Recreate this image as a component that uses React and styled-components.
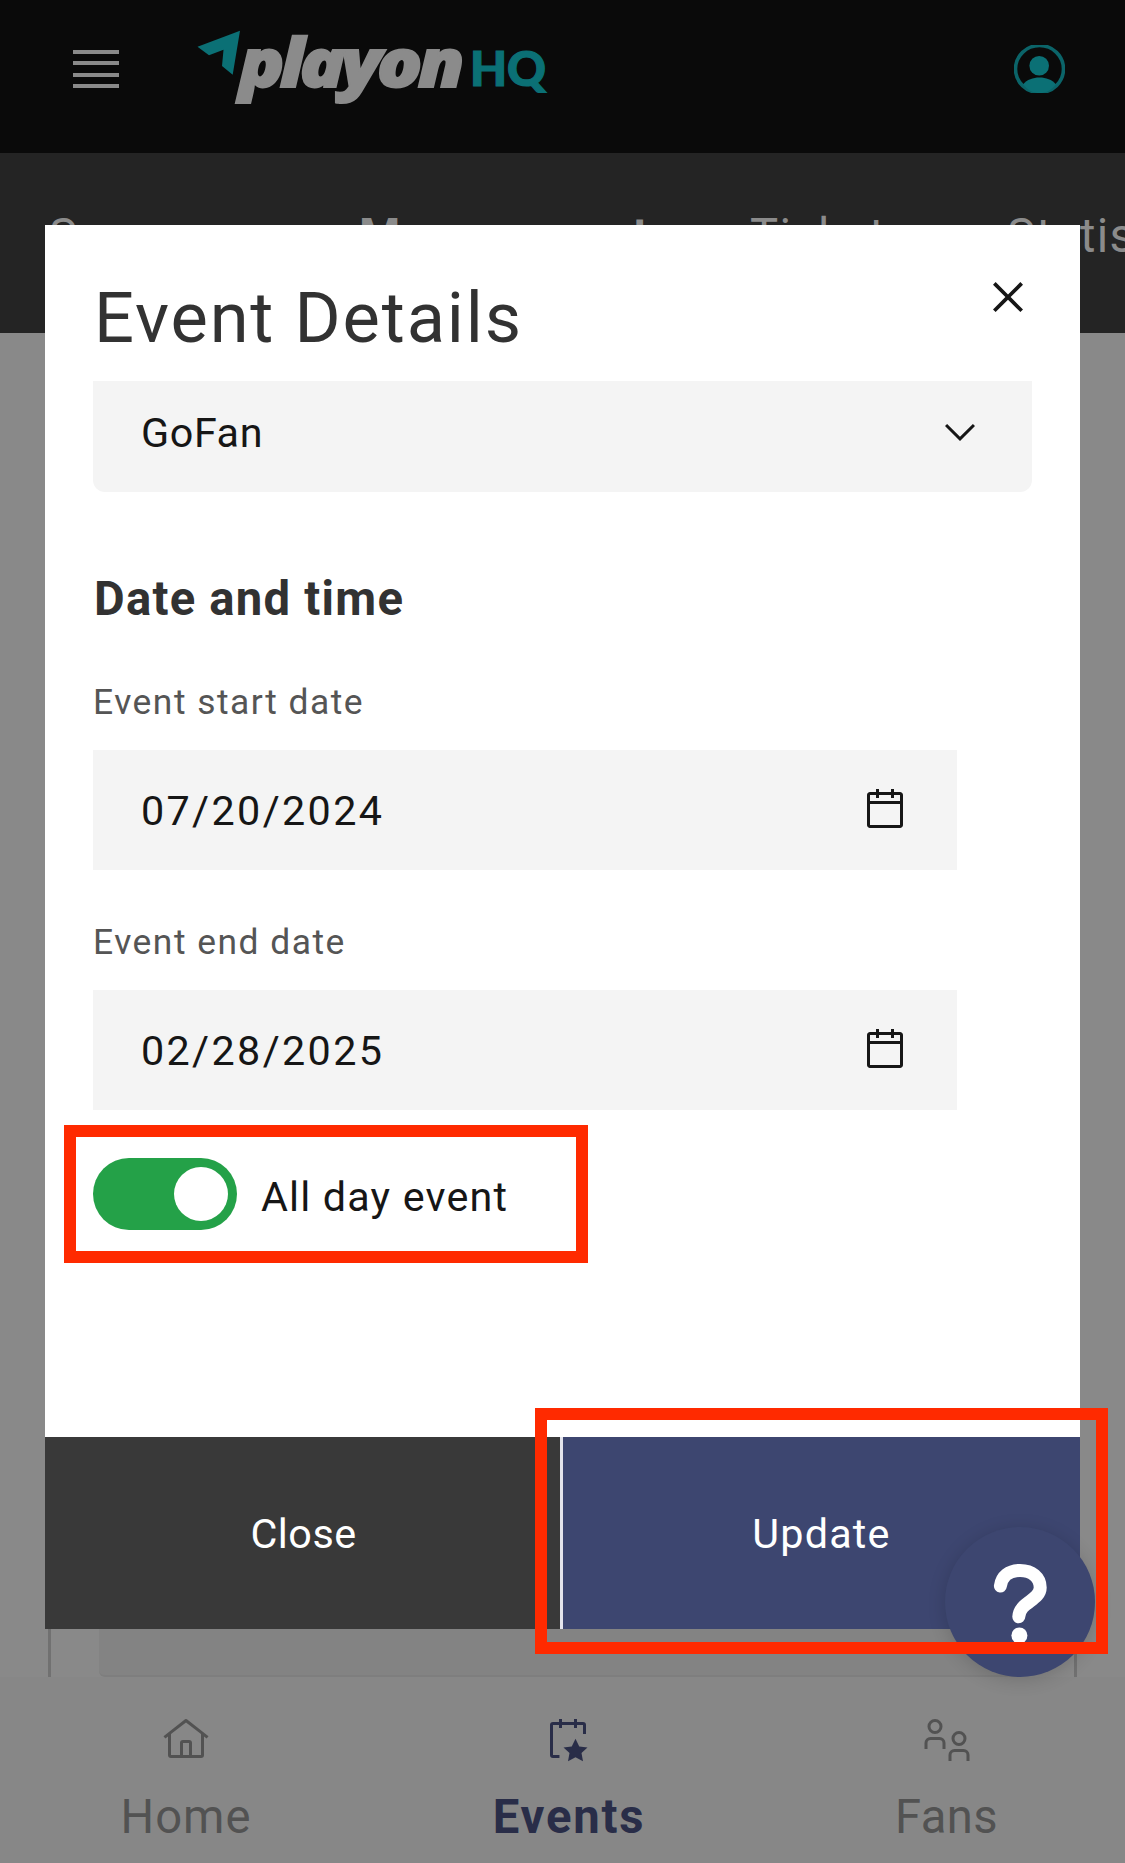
import React from "react";
import styled, { createGlobalStyle, css } from "styled-components";

const GlobalStyle = createGlobalStyle`
  *, *::before, *::after { box-sizing: border-box; }
  body {
    margin: 0;
    background: #888888;
    font-family: Roboto, "Liberation Sans", sans-serif;
  }
  h1, h2, p { margin: 0; }
  button { font: inherit; border: 0; padding: 0; background: none; }
  svg { display: block; }
`;

const Page = styled.div`
  position: relative;
  display: flex;
  flex-direction: column;
  width: 1125px;
  height: 1863px;
  overflow: hidden;
  background: #888888;
`;

const TopBar = styled.header`
  display: flex;
  flex: none;
  height: 153px;
  padding: 25px 60px 0 73px;
  background: #0a0a0a;
`;

const MenuButton = styled.button`
  display: flex;
  flex-direction: column;
  justify-content: space-between;
  width: 46px;
  height: 38px;
  margin: 25px 76px 0 0;
`;

const MenuBar = styled.span`
  height: 4px;
  background: #8a8a8a;
`;

const Account = styled.button`
  width: 51px;
  height: 48px;
  margin: 20px 0 0 auto;
`;

const TabBar = styled.nav`
  display: grid;
  grid-template-columns: 310px 391px 257px 260px;
  flex: none;
  height: 180px;
  padding: 53px 0 0 49px;
  background: #242424;
`;

const Tab = styled.span`
  color: #8b8b8b;
  font-size: 47.2px;
  line-height: 60px;
  letter-spacing: ${(p) => (p.$active ? "1.1px" : "1.3px")};
  font-weight: ${(p) => (p.$active ? 700 : 400)};
  white-space: nowrap;
`;

const Content = styled.main`
  display: flex;
  flex: 1;
  padding: 0 48px;
  background: #898989;
`;

const Card = styled.div`
  display: flex;
  flex: 1;
  padding: 0 48px;
  border: solid #717171;
  border-width: 0 3px;
`;

const CardField = styled.div`
  flex: 1;
  border-bottom: 2px solid #7e7e7e;
  border-radius: 0 0 6px 6px;
  background: #838383;
`;

const BottomNav = styled.nav`
  display: flex;
  flex: none;
  height: 186px;
  background: #878787;
`;

const NavItem = styled.div`
  display: flex;
  flex-direction: column;
  align-items: center;
  width: ${(p) => p.$width}px;
  padding-top: 39px;
  color: ${(p) => (p.$active ? "#292d48" : "#525252")};
  font-weight: ${(p) => (p.$active ? 700 : 400)};
`;

const NavLabel = styled.span`
  margin-top: 23px;
  padding-left: ${(p) => (p.$active ? 3 : 0)}px;
  font-size: 47.2px;
  line-height: 60px;
  letter-spacing: ${(p) => p.$spacing}px;
`;

const Modal = styled.section`
  position: absolute;
  top: 225px;
  left: 45px;
  display: flex;
  flex-direction: column;
  width: 1035px;
  height: 1404px;
  background: #ffffff;
`;

const ModalHeader = styled.div`
  display: flex;
  justify-content: space-between;
  height: 156px;
  padding: 42px 42px 0 49px;
`;

const Title = styled.h1`
  margin-top: 9px;
  color: #323232;
  font-size: 70.4px;
  font-weight: 400;
  line-height: 84px;
  letter-spacing: 1.85px;
`;

const IconButton = styled.button`
  height: 60px;
  color: #161616;
`;

const ModalBody = styled.div`
  display: flex;
  flex: 1;
  flex-direction: column;
  align-items: flex-start;
  padding: 0 48px;
`;

const box = css`
  display: flex;
  align-items: center;
  justify-content: space-between;
  background: #f4f4f4;
  color: #161616;
  font-size: 41.3px;
  line-height: 48px;
`;

const Value = styled.span`
  padding-top: 2px;
`;

const Select = styled.div`
  ${box}
  width: 939px;
  height: 111px;
  padding: 0 48px 9px 48px;
  border-radius: 0 0 12px 12px;
  letter-spacing: 0.6px;
`;

const SectionTitle = styled.h2`
  margin: 77px 0 0 1px;
  color: #323232;
  font-size: 47.2px;
  font-weight: 700;
  line-height: 60px;
  letter-spacing: 1.25px;
`;

const Field = styled.label`
  display: flex;
  flex-direction: column;
  gap: 24px;
  margin-top: ${(p) => p.$top}px;
`;

const FieldLabel = styled.span`
  color: #555555;
  font-size: 35.4px;
  line-height: 48px;
  letter-spacing: 1.5px;
`;

const DateInput = styled.span`
  ${box}
  width: 864px;
  height: 120px;
  padding: 0 48px 0 48px;
  letter-spacing: 2.35px;
`;

const ToggleRow = styled.div`
  display: flex;
  gap: 24px;
  margin-top: 48px;
`;

const Switch = styled.span`
  display: flex;
  justify-content: flex-end;
  width: 144px;
  height: 72px;
  padding: 9px;
  border-radius: 36px;
  background: #24a148;
`;

const Knob = styled.span`
  width: 54px;
  height: 54px;
  border-radius: 50%;
  background: #ffffff;
`;

const SwitchLabel = styled.span`
  padding-top: 3px;
  color: #161616;
  font-size: 41.3px;
  line-height: 72px;
  letter-spacing: 1.15px;
`;

const ModalFooter = styled.div`
  display: flex;
  gap: 3px;
  height: 192px;
  background: #e4e4ec;
`;

const Action = styled.button`
  width: ${(p) => (p.$primary ? 517 : 515)}px;
  padding: 1px 0 0 ${(p) => (p.$primary ? 0 : 2)}px;
  background: ${(p) => (p.$primary ? "#3d4670" : "#393939")};
  color: #ffffff;
  font-size: 41.3px;
  line-height: 48px;
  letter-spacing: ${(p) => (p.$primary ? 1.2 : 0.5)}px;
`;

const HelpButton = styled.button`
  position: absolute;
  top: 1527px;
  left: 945px;
  width: 150px;
  height: 150px;
  border-radius: 50%;
  background: #3d4670;
  box-shadow: 0 3px 18px rgba(0, 0, 0, 0.16);
`;

const Highlight = styled.div`
  position: absolute;
  top: ${(p) => p.$y}px;
  left: ${(p) => p.$x}px;
  width: ${(p) => p.$w}px;
  height: ${(p) => p.$h}px;
  border: 12px solid #ff2a00;
  pointer-events: none;
`;

const Logo = () => (
  <svg width="354" height="100" viewBox="195 25 354 100" overflow="visible">
    <path fill="#0b7075" d="M197.5 46.7 240 30.7 232.7 74.7 222 66 223.5 49.7 209 55.3Z" />
    <text
      x="239"
      y="87"
      textLength="221"
      lengthAdjust="spacingAndGlyphs"
      letterSpacing="-4"
      fill="#8b8b8b"
      stroke="#8b8b8b"
      strokeWidth="2"
      fontFamily="Open Sans"
      fontStyle="italic"
      fontWeight="800"
      fontSize="68"
    >
      playon
    </text>
    <text
      x="470"
      y="86"
      textLength="76"
      lengthAdjust="spacing"
      fill="#0b7075"
      stroke="#0b7075"
      strokeWidth="1.2"
      fontFamily="Lato"
      fontWeight="900"
      fontSize="48"
    >
      HQ
    </text>
  </svg>
);

const AccountIcon = () => (
  <svg width="51" height="48" viewBox="0 0 51 48">
    <ellipse cx="25.5" cy="24" rx="24" ry="23.5" fill="none" stroke="#0b6469" strokeWidth="3.6" />
    <circle cx="25.2" cy="20.8" r="9.8" fill="#0b7075" />
    <path fill="#0b7075" d="M9 39.5C13 34.5 19 32.5 25.5 32.5S38 34.5 42 39.5C37 45.5 32 48 25.5 48S14 45.5 9 39.5Z" />
  </svg>
);

const Icon = ({ size = 48, grid = 32, children }) => (
  <svg width={size} height={size} viewBox={`0 0 ${grid} ${grid}`} fill="currentColor">
    {children}
  </svg>
);

const CloseIcon = () => (
  <Icon size={60}>
    <path d="M24 9.4 22.6 8 16 14.6 9.4 8 8 9.4 14.6 16 8 22.6 9.4 24 16 17.4 22.6 24 24 22.6 17.4 16Z" />
  </Icon>
);

const ChevronIcon = () => (
  <Icon grid={16}>
    <path d="M8 11 3 6 3.7 5.3 8 9.6 12.3 5.3 13 6Z" />
  </Icon>
);

const CalendarIcon = () => (
  <Icon>
    <path d="M26 4h-4V2h-2v2h-8V2h-2v2H6C4.9 4 4 4.9 4 6v20c0 1.1.9 2 2 2h20c1.1 0 2-.9 2-2V6C28 4.9 27.1 4 26 4ZM26 26H6V12h20ZM26 10H6V6h4v2h2V6h8v2h2V6h4Z" />
  </Icon>
);

const HomeIcon = () => (
  <Icon>
    <path d="M16.612 2.214a1.01 1.01 0 0 0-1.243 0L1 13.419l1.243 1.572L4 13.621V26a2 2 0 0 0 2 2H26a2 2 0 0 0 2-2V13.63L29.757 15 31 13.428ZM18 26H14V18h4Zm2 0V18a2 2 0 0 0-2-2H14a2 2 0 0 0-2 2v8H6V12.062l10-7.79 10 7.8V26Z" />
  </Icon>
);

const EventIcon = () => (
  <Icon>
    <path d="M26 4H22V2H20V4H12V2H10V4H6A2 2 0 0 0 4 6V26a2 2 0 0 0 2 2h4.300V26H6V6h4V8h2V6h8V8h2V6h4v6h2V6A2 2 0 0 0 26 4Z" />
    <path d="M21 15.2 23.5 20.3 29 21 25 24.7 26 30.2 21 27.5 16 30.2 17 24.7 13 21 18.5 20.3Z" />
  </Icon>
);

const PERSON = "M15 22h-2v-4a2 2 0 0 0-2-2H5a2 2 0 0 0-2 2v4H1v-4a4 4 0 0 1 4-4h6a4 4 0 0 1 4 4ZM8 4a3 3 0 1 1 0 6 3 3 0 0 1 0-6m0-2a5 5 0 1 0 0 10A5 5 0 0 0 8 2Z";

const FansIcon = () => (
  <Icon>
    <path d={PERSON} />
    <path d={PERSON} transform="translate(16 8)" />
  </Icon>
);

const HelpIcon = () => (
  <svg width="150" height="150" viewBox="945 1527 150 150">
    <path
      d="M1000.4 1586C1001.6 1576.5 1009 1570.4 1020 1570.4C1032 1570.4 1040.200 1577.5 1040.200 1587.5C1040.200 1600.5 1019.5 1602 1018.8 1616.8"
      fill="none"
      stroke="#ffffff"
      strokeWidth="13"
      strokeLinecap="round"
    />
    <circle cx="1019.4" cy="1635.5" r="8" fill="#ffffff" />
  </svg>
);

const tabs = ["Summary", "Management", "Tickets", "Statistics"];

const navItems = [
  { label: "Home", icon: <HomeIcon />, width: 372, spacing: 1 },
  { label: "Events", icon: <EventIcon />, width: 391, spacing: 1.8, active: true },
  { label: "Fans", icon: <FansIcon />, width: 367, spacing: 0.4 },
];

const dates = [
  { label: "Event start date", value: "07/20/2024", top: 49 },
  { label: "Event end date", value: "02/28/2025", top: 48 },
];

export default function App() {
  return (
    <>
      <GlobalStyle />
      <Page>
        <TopBar>
          <MenuButton aria-label="Menu">
            <MenuBar />
            <MenuBar />
            <MenuBar />
            <MenuBar />
          </MenuButton>
          <Logo />
          <Account aria-label="Account">
            <AccountIcon />
          </Account>
        </TopBar>
        <TabBar>
          {tabs.map((tab) => (
            <Tab key={tab} $active={tab === "Management"}>
              {tab}
            </Tab>
          ))}
        </TabBar>
        <Content>
          <Card>
            <CardField />
          </Card>
        </Content>
        <BottomNav>
          {navItems.map((item) => (
            <NavItem key={item.label} style={{ flexShrink: 0 }} $width={item.width} $active={item.active}>
              {item.icon}
              <NavLabel $spacing={item.spacing} $active={item.active}>
                {item.label}
              </NavLabel>
            </NavItem>
          ))}
        </BottomNav>

        <Modal role="dialog">
          <ModalHeader>
            <Title>Event Details</Title>
            <IconButton aria-label="Close dialog">
              <CloseIcon />
            </IconButton>
          </ModalHeader>
          <ModalBody>
            <Select>
              <Value>GoFan</Value>
              <ChevronIcon />
            </Select>
            <SectionTitle>Date and time</SectionTitle>
            {dates.map((date) => (
              <Field key={date.label} $top={date.top}>
                <FieldLabel>{date.label}</FieldLabel>
                <DateInput>
                  <Value>{date.value}</Value>
                  <CalendarIcon />
                </DateInput>
              </Field>
            ))}
            <ToggleRow>
              <Switch>
                <Knob />
              </Switch>
              <SwitchLabel>All day event</SwitchLabel>
            </ToggleRow>
          </ModalBody>
          <ModalFooter>
            <Action>Close</Action>
            <Action $primary>Update</Action>
          </ModalFooter>
        </Modal>

        <HelpButton aria-label="Help">
          <HelpIcon />
        </HelpButton>
        <Highlight $x={64} $y={1125} $w={524} $h={138} />
        <Highlight $x={535} $y={1408} $w={573} $h={246} />
      </Page>
    </>
  );
}
